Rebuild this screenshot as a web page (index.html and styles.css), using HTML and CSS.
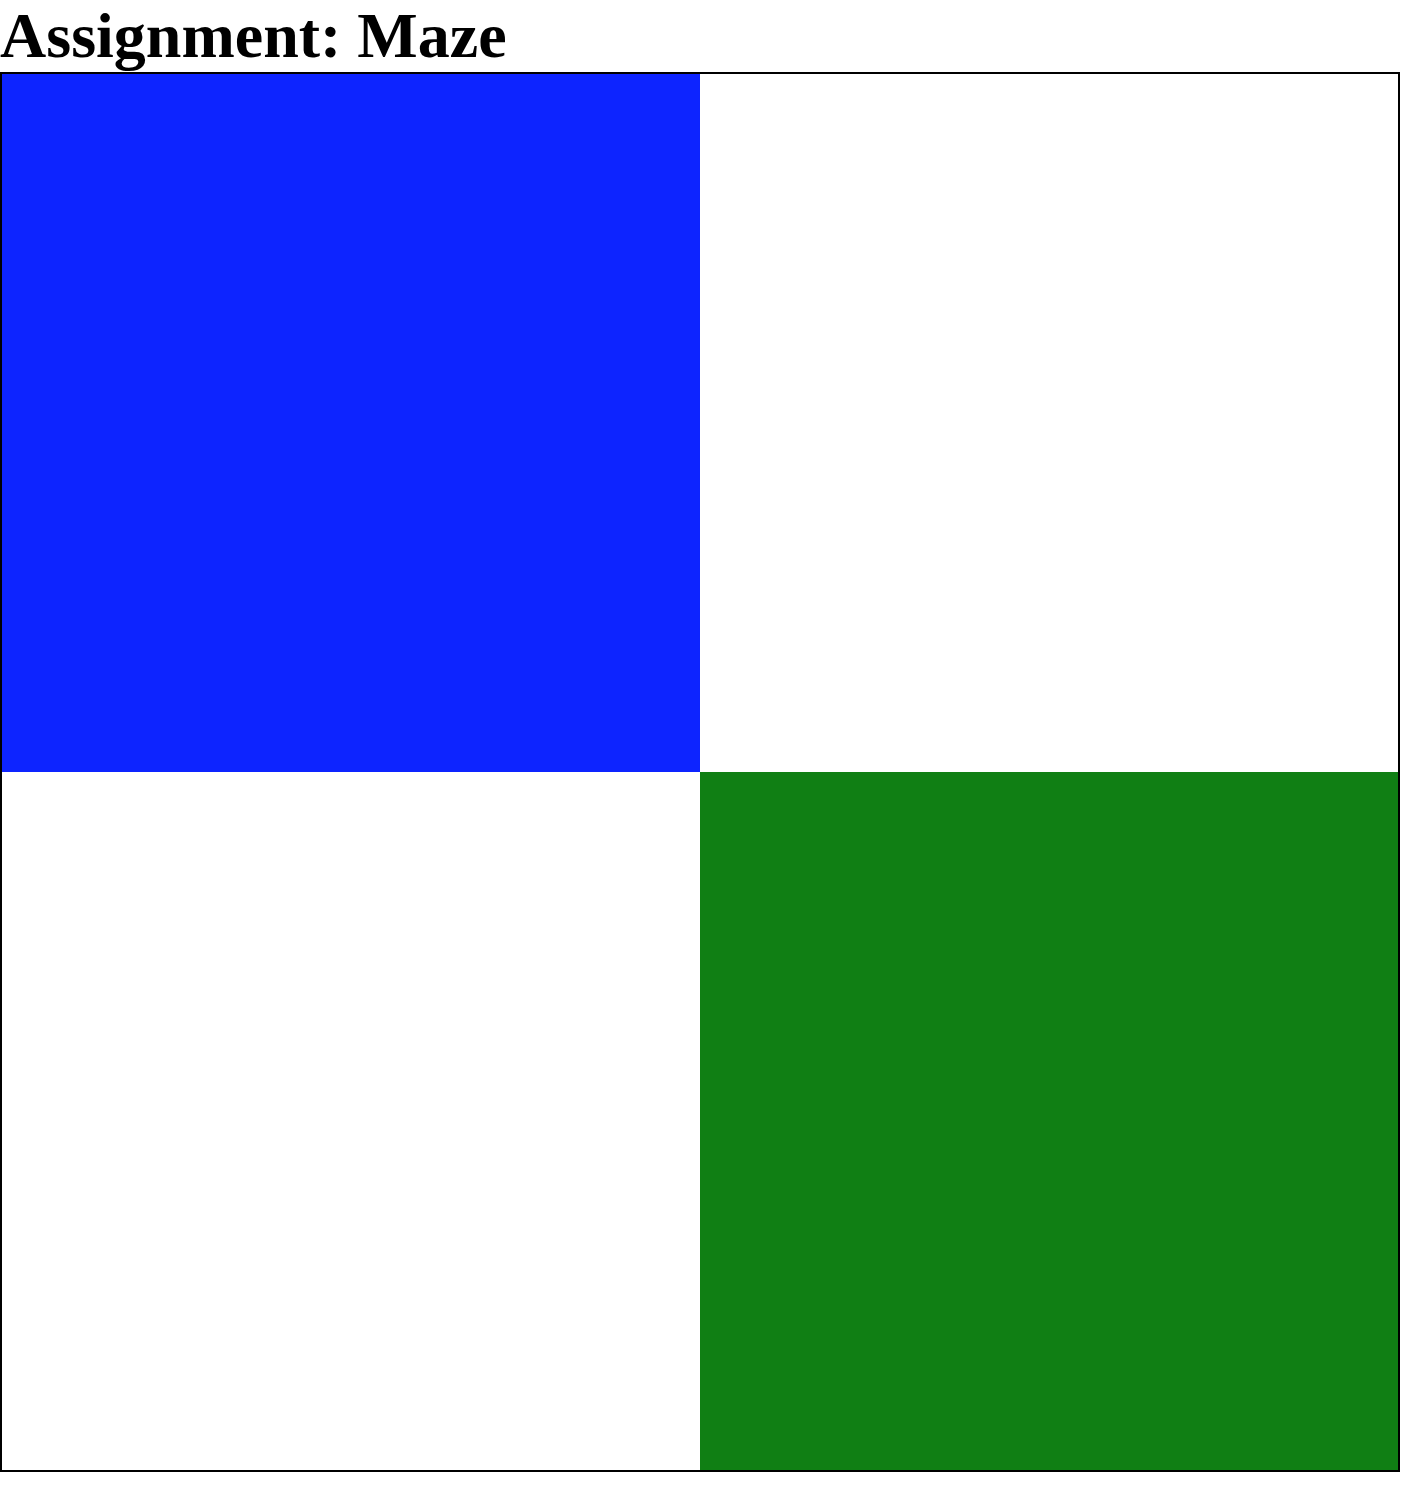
FILE: index.html
```html
<!DOCTYPE html>
<html>
<head>
<meta charset="utf-8">
<title>Maze</title>
<link rel="stylesheet" href="styles.css">
</head>
<body>
<h1 class="title">Assignment: Maze</h1>
<div class="maze">
  <div class="cell start"></div>
  <div class="cell open"></div>
  <div class="cell open"></div>
  <div class="cell goal"></div>
</div>
</body>
</html>
```
FILE: styles.css
```css
body {
  margin: 0;
  background: #fff;
}
.title {
  margin: 0;
  font-family: "Liberation Serif", "Times New Roman", serif;
  font-weight: bold;
  font-size: 64px;
  line-height: 72px;
  color: #000;
}
.maze {
  width: 1396px;
  height: 1396px;
  border: 2px solid #000;
  display: grid;
  grid-template-columns: 1fr 1fr;
  grid-template-rows: 1fr 1fr;
}
.cell.start { background: #0d24ff; }
.cell.open { background: #fff; }
.cell.goal { background: #107f14; }
```
